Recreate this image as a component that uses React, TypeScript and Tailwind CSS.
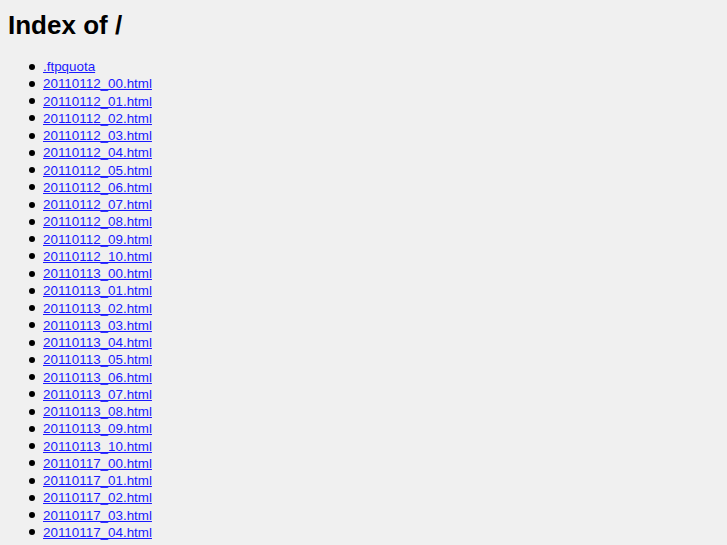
const files = [
  ".ftpquota",
  ...["00", "01", "02", "03", "04", "05", "06", "07", "08", "09", "10"].map((n) => `20110112_${n}.html`),
  ...["00", "01", "02", "03", "04", "05", "06", "07", "08", "09", "10"].map((n) => `20110113_${n}.html`),
  ...["00", "01", "02", "03", "04"].map((n) => `20110117_${n}.html`),
];

export default function App() {
  return (
    <div className="min-h-[545px] bg-[#f0f0f0] p-2 font-['Liberation_Sans',Arial,sans-serif] text-black">
      <h1 className="mt-[2px] mb-[18px] text-[26px] font-bold leading-[30px]">Index of /</h1>
      <ul className="pl-[21px] text-[13.4px] leading-[17.25px]">
        {files.map((f) => (
          <li key={f} className="flex h-[17.25px] items-center">
            <span className="mr-[8px] h-[6px] w-[6px] shrink-0 rounded-full bg-black" />
            <a href="#" className="text-[#1a1aff] underline">
              {f}
            </a>
          </li>
        ))}
      </ul>
    </div>
  );
}
